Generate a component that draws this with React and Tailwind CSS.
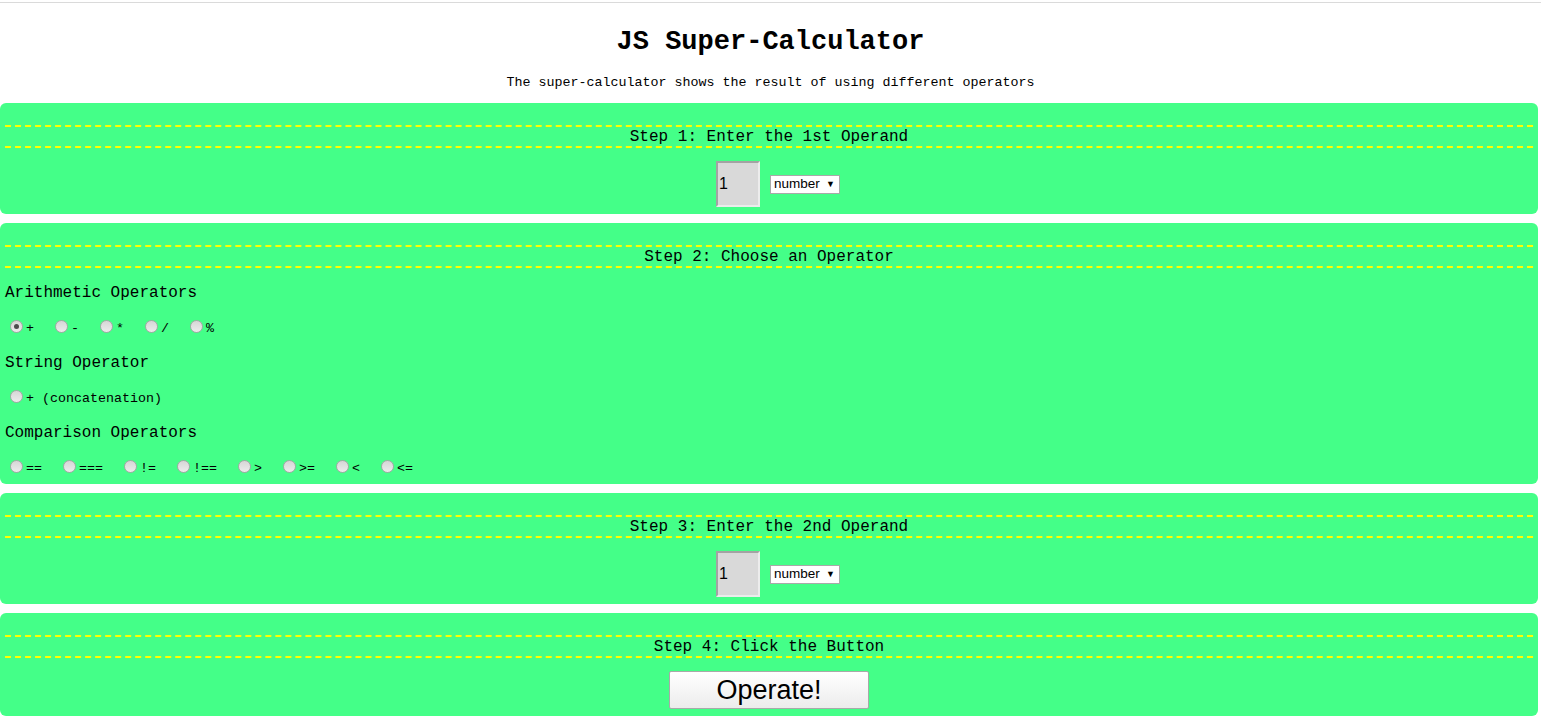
import React from "react";

const mono = "font-['Liberation_Mono','Courier_New',monospace]";
const sans = "font-['Liberation_Sans',Arial,sans-serif]";

const Radio = ({ checked }) => (
  <span className="ml-[5px] mr-[3px] flex h-[13px] w-[13px] shrink-0 items-center justify-center rounded-full border border-[#a6a6a6] bg-gradient-to-b from-[#d6d6d6] to-[#ececec]">
    {checked && <span className="h-[5px] w-[5px] rounded-full bg-[#4d4d4d]" />}
  </span>
);

const Option = ({ label, checked, last }) => (
  <label className={`flex items-center ${last ? "" : "mr-[16px]"}`}>
    <Radio checked={checked} />
    <span className="whitespace-pre pt-[4px] text-[13.33px] leading-[16px]">{label}</span>
  </label>
);

const StepTitle = ({ children }) => (
  <div className="mx-[5px] border-y-2 border-dashed border-[#ffff00] pt-[2px] text-center text-[16px] leading-[17px]">
    {children}
  </div>
);

const Panel = ({ title, children }) => (
  <div className="mr-[3px] rounded-[6px] bg-[#44ff88] pt-[22px] pb-[7px]">
    <StepTitle>{title}</StepTitle>
    {children}
  </div>
);

const Operand = () => (
  <div className="mt-[13px] flex items-center justify-center pl-[18px]">
    <div
      className={`flex h-[46px] w-[44px] items-center border-2 border-t-[#a3a3a3] border-l-[#a3a3a3] border-r-[#ececec] border-b-[#ececec] bg-[#d9d9d9] pl-[1px] text-[16px] ${sans}`}
    >
      1
    </div>
    <div
      className={`ml-[10px] flex h-[19px] w-[70px] items-center justify-between border border-[#a9a9a9] bg-white pl-[3px] pr-[4px] text-[13.5px] leading-none ${sans}`}
    >
      <span>number</span>
      <span className="text-[9px]">▼</span>
    </div>
  </div>
);

const Row = ({ children, className = "" }) => (
  <div className={`flex h-[35px] items-center pl-[5px] ${className}`}>{children}</div>
);

export default function App() {
  const arith = ["+", "-", "*", "/", "%"];
  const comp = ["==", "===", "!=", "!==", ">", ">=", "<", "<="];

  return (
    <div className={`min-h-screen bg-white text-black ${mono}`}>
      <div className="h-[2px]" />
      <div className="h-px bg-[#dadada]" />
      <h1 className="mt-[24px] text-center text-[27px] font-bold leading-[31px]">JS Super-Calculator</h1>
      <p className="mt-[17px] text-center text-[13.33px] leading-[16px]">
        The super-calculator shows the result of using different operators
      </p>

      <div className="mt-[12px] flex flex-col gap-[9px]">
        <Panel title="Step 1: Enter the 1st Operand">
          <Operand />
        </Panel>

        <Panel title="Step 2: Choose an Operator">
          <div className="mt-[6px] mb-[-7px]">
            <Row className="pt-[3px] text-[16px]">Arithmetic Operators</Row>
            <Row className="pl-0">
              {arith.map((op, i) => (
                <Option key={op} label={op} checked={i === 0} last={i === arith.length - 1} />
              ))}
            </Row>
            <Row className="pt-[3px] text-[16px]">String Operator</Row>
            <Row className="pl-0">
              <Option label="+ (concatenation)" last />
            </Row>
            <Row className="pt-[3px] text-[16px]">Comparison Operators</Row>
            <Row className="pl-0">
              {comp.map((op, i) => (
                <Option key={op} label={op} last={i === comp.length - 1} />
              ))}
            </Row>
          </div>
        </Panel>

        <Panel title="Step 3: Enter the 2nd Operand">
          <Operand />
        </Panel>

        <Panel title="Step 4: Click the Button">
          <div className="mt-[13px] flex justify-center">
            <button
              className={`h-[38px] w-[200px] rounded-[2px] border border-[#a9a9a9] bg-gradient-to-b from-white to-[#ececec] text-[27px] leading-none ${sans}`}
            >
              Operate!
            </button>
          </div>
        </Panel>
      </div>
    </div>
  );
}
